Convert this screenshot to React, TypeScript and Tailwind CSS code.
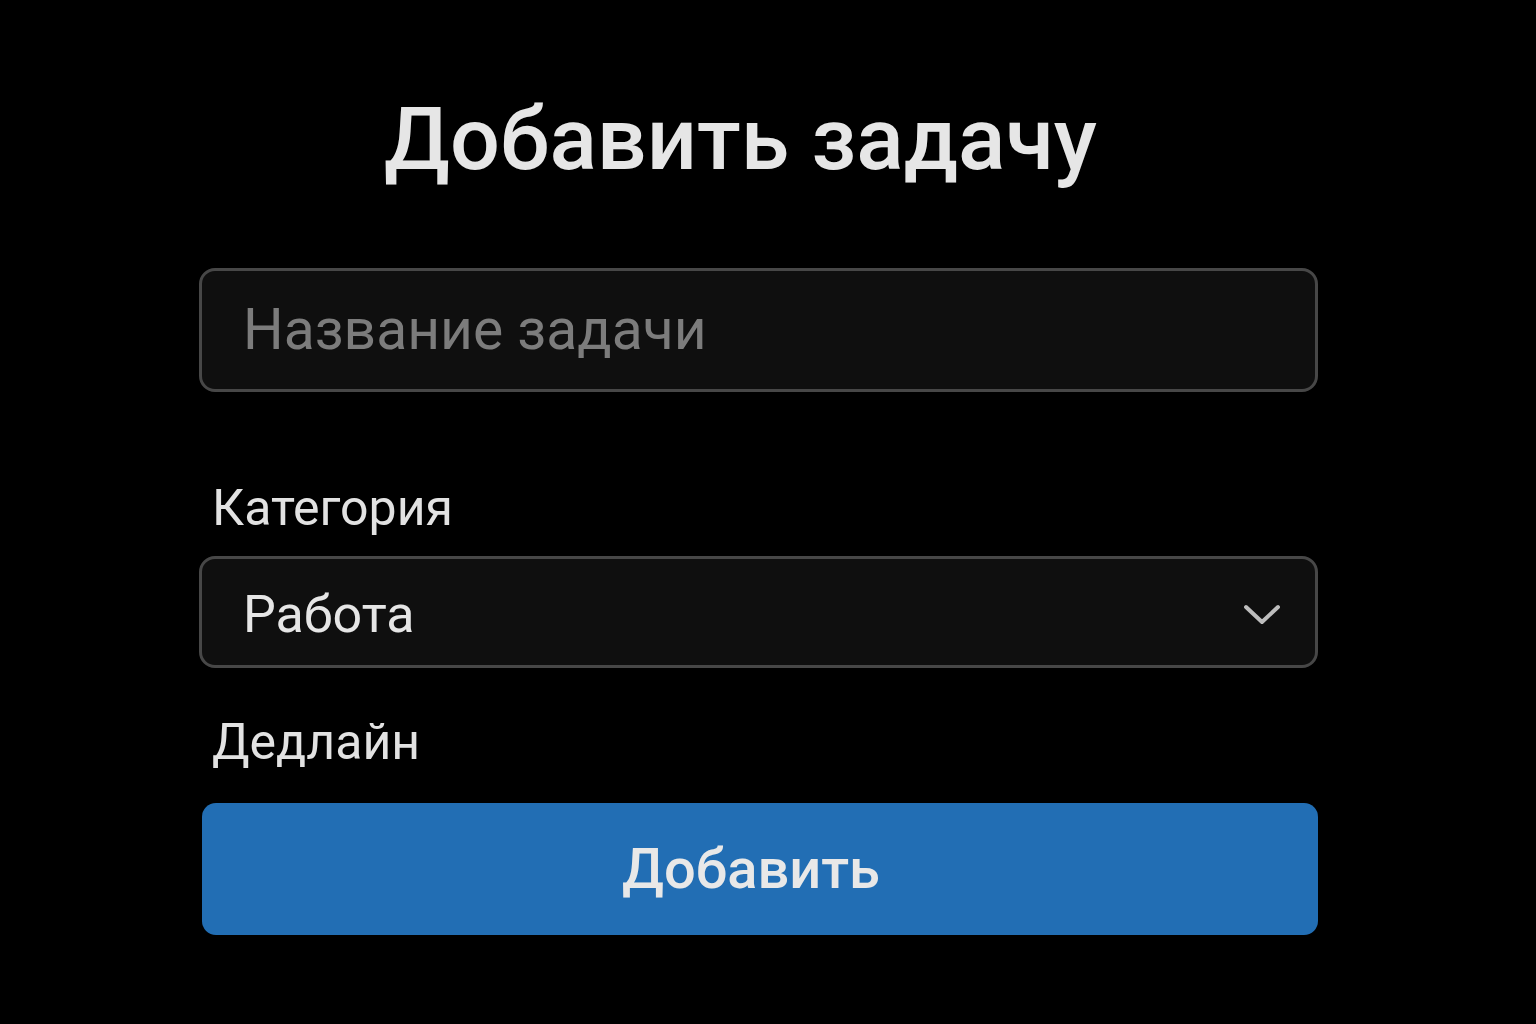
import React from "react";

export default function App() {
  return (
    <div className="min-h-screen w-full bg-black" style={{ fontFamily: "Roboto, 'Noto Sans', sans-serif" }}>
      <div className="ml-[199px] w-[1119px] pt-[84px]">
        <h1 className="text-center text-[88px] font-medium leading-[110px] text-[#e6e6e6] pr-[36px]">Добавить задачу</h1>
        <div className="mt-[74px] flex h-[124px] items-center rounded-[16px] border-[3px] border-[#474747] bg-[#0f0f0f] pl-[41px]">
          <span className="text-[57px] text-[#7c7c7c]">Название задачи</span>
        </div>
        <div className="mt-[86px] pl-[13px] text-[50px] leading-[60px] text-[#e2e2e2]">Категория</div>
        <div className="mt-[18px] flex h-[112px] items-center justify-between rounded-[16px] border-[3px] border-[#474747] bg-[#0f0f0f] pl-[41px] pr-[34px]">
          <span className="mt-[6px] text-[52px] text-[#e6e6e6]">Работа</span>
          <svg className="mt-[6px]" width="38" height="24" viewBox="0 0 38 24" fill="none">
            <path d="M3 4 L19 19 L35 4" stroke="#bdbdbd" strokeWidth="4" strokeLinecap="round" strokeLinejoin="round" />
          </svg>
        </div>
        <div className="mt-[44px] pl-[13px] text-[50px] leading-[60px] text-[#e2e2e2]">Дедлайн</div>
        <button className="mt-[31px] ml-[3px] flex h-[132px] w-[1116px] items-center justify-center rounded-[14px] bg-[#226eb4] pr-[18px] text-[56px] font-medium text-[#e8e8e8]">Добавить</button>
      </div>
    </div>
  );
}
